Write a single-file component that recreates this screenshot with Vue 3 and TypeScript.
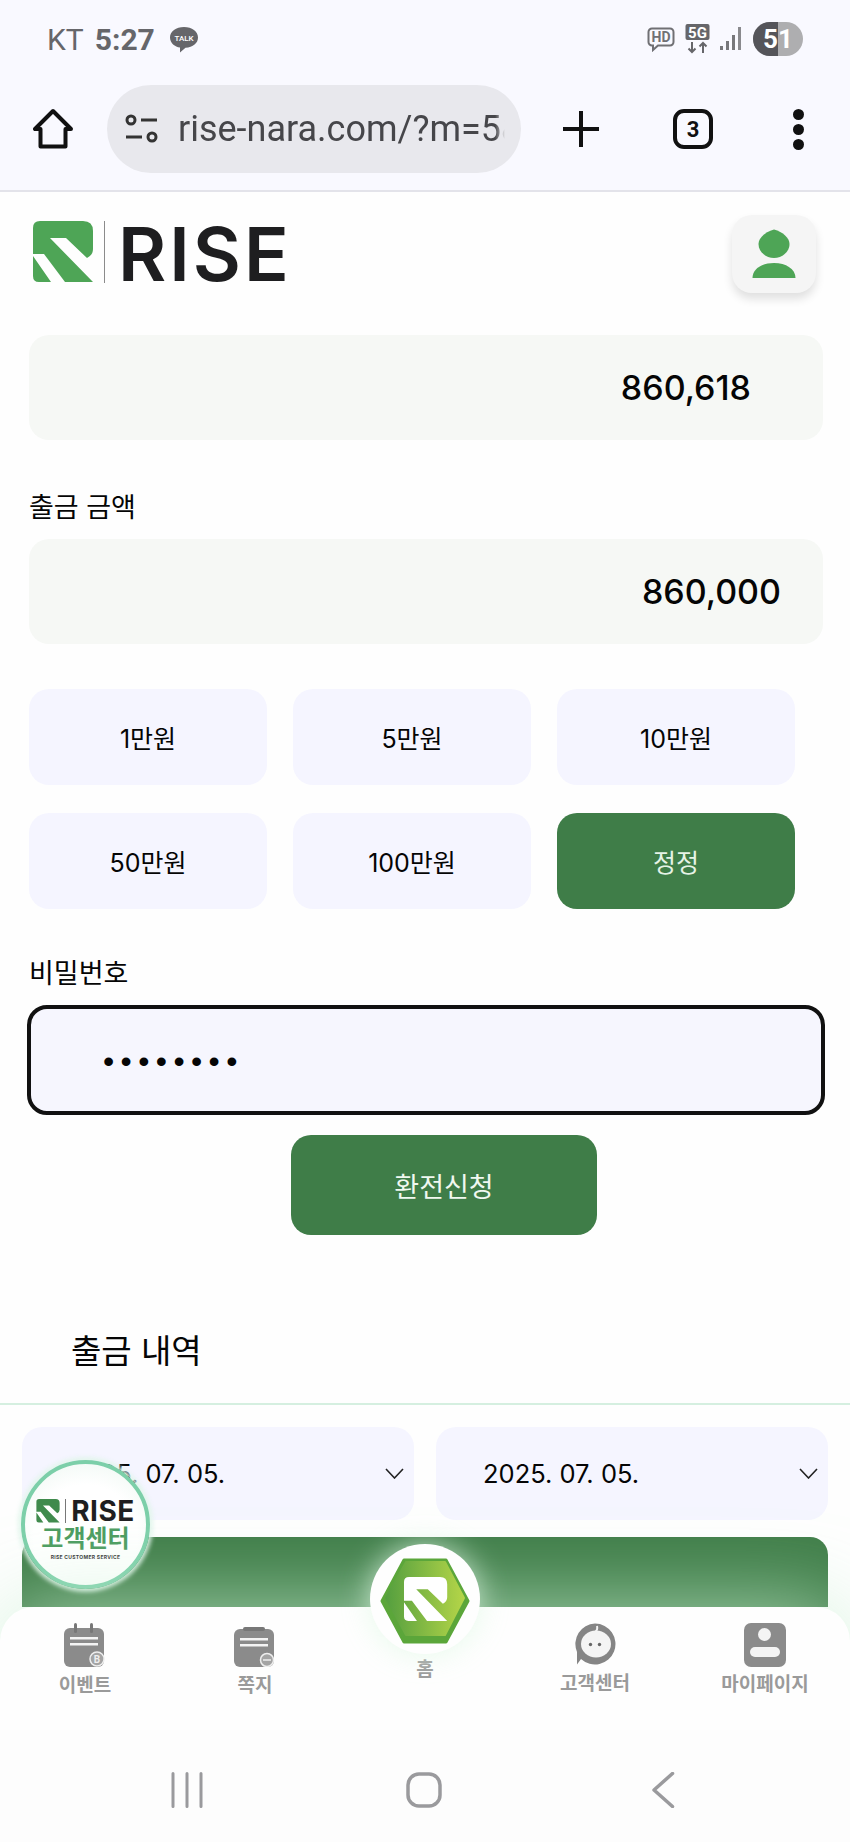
<script setup lang="ts">
interface NavItem {
  label: string;
  kind: "event" | "note" | "home" | "support" | "my";
}

// logo mark, drawn on a 60x62 box
const logoMark =
  "M7 0H50Q60 0 60 10V28Q60 34 54 37L33 17H17L60 61H32L11 33H0V7Q0 0 7 0ZM0 35L18 61H6Q0 61 0 55Z";

const amounts: { label: string; primary?: boolean }[] = [
  { label: "1만원" },
  { label: "5만원" },
  { label: "10만원" },
  { label: "50만원" },
  { label: "100만원" },
  { label: "정정", primary: true },
];

const navItems: NavItem[] = [
  { label: "이벤트", kind: "event" },
  { label: "쪽지", kind: "note" },
  { label: "홈", kind: "home" },
  { label: "고객센터", kind: "support" },
  { label: "마이페이지", kind: "my" },
];
</script>

<template>
  <div class="phone">
    <div class="status-bar">
      <div class="status-left">
        <span class="carrier">KT</span>
        <span class="clock">5:27</span>
        <svg class="talk" width="30" height="27" viewBox="0 0 30 27">
          <path d="M15 1C7 1 1 5.500 1 11.500C1 17 6 21 11 21.500L11 26.500L16.500 21.800C24 21.500 29 17 29 11.500C29 5.500 23 1 15 1Z" fill="#66666a" />
          <text x="15" y="14.500" text-anchor="middle" class="talk-text">TALK</text>
        </svg>
      </div>
      <div class="status-right">
        <svg width="28" height="25" viewBox="0 0 28 25">
          <path d="M5 1.500H23A3.500 3.500 0 0 1 26.500 5V15A3.500 3.500 0 0 1 23 18.500H11L6 23V18.500H5A3.500 3.500 0 0 1 1.500 15V5A3.500 3.500 0 0 1 5 1.500Z" fill="none" stroke="#707074" stroke-width="2" />
          <text x="14" y="15" text-anchor="middle" class="hd-text">HD</text>
        </svg>
        <svg width="25" height="30" viewBox="0 0 25 30">
          <rect x="0.500" y="0" width="24" height="16" rx="2" fill="#66666a" />
          <text x="12.500" y="13.500" text-anchor="middle" class="fiveg-text">5G</text>
          <path d="M7 18V28M3.500 24.500L7 28L10.500 24.500M18 29V19M14.500 22.500L18 19L21.500 22.500" fill="none" stroke="#66666a" stroke-width="2" />
        </svg>
        <svg width="22" height="24" viewBox="0 0 22 24">
          <rect x="0" y="19" width="3" height="4" fill="#77777b" />
          <rect x="6" y="14" width="3" height="9" fill="#77777b" />
          <rect x="12" y="8" width="3" height="15" fill="#77777b" />
          <rect x="18" y="0" width="3" height="23" fill="#8a8a8e" />
        </svg>
        <div class="battery">
          <span class="battery-level"></span>
          <span class="battery-num">51</span>
        </div>
      </div>
    </div>

    <div class="toolbar">
      <svg width="40" height="42" viewBox="0 0 40 42">
        <path d="M20 3L2 21H7.500V38.500H32.500V21H38Z" fill="none" stroke="#111" stroke-width="4" stroke-linejoin="round" />
      </svg>
      <div class="url-pill">
        <svg width="33" height="30" viewBox="0 0 33 30">
          <circle cx="6" cy="6" r="4" fill="none" stroke="#333" stroke-width="3" />
          <path d="M16 6H32M1 23H17" stroke="#333" stroke-width="3" />
          <circle cx="27" cy="23" r="4" fill="none" stroke="#333" stroke-width="3" />
        </svg>
        <span class="url-text">rise-nara.com/?m=5&amp;</span>
      </div>
      <svg class="plus" width="38" height="38" viewBox="0 0 38 38">
        <path d="M19 1V37M1 19H37" stroke="#111" stroke-width="4" />
      </svg>
      <div class="tabs">3</div>
      <div class="dots"><i></i><i></i><i></i></div>
    </div>

    <main class="page">
      <header class="site-header">
        <div class="logo">
          <svg width="60" height="62" viewBox="0 0 60 62">
            <path :d="logoMark" fill="#4ea556" />
          </svg>
          <span class="logo-rule"></span>
          <span class="logo-text">RISE</span>
        </div>
        <button class="profile" type="button">
          <svg width="44" height="50" viewBox="0 0 44 50">
            <path d="M22 0.500C31 3 37.500 9 37.500 15C37.500 23 30 29 22 29C14 29 6.500 23 6.500 15C6.500 9 13 3 22 0.500Z" fill="#4ea556" />
            <path d="M0.500 49C0.500 40 10 34 22 34C34 34 43.500 40 43.500 49Z" fill="#4ea556" />
          </svg>
        </button>
      </header>

      <section class="form">
        <div class="field first"><span class="balance">860,618</span></div>
        <label class="label">출금 금액</label>
        <div class="field"><span class="amount">860,000</span></div>

        <div class="amount-grid">
          <button
            v-for="item in amounts"
            :key="item.label"
            type="button"
            class="amount-btn"
            :class="{ primary: item.primary }"
          >
            {{ item.label }}
          </button>
        </div>

        <label class="label pw-label">비밀번호</label>
        <div class="password">••••••••</div>
        <button class="submit" type="button">환전신청</button>
      </section>

      <h2 class="history-title">출금 내역</h2>
      <div class="history">
        <div class="dates">
          <div v-for="n in 2" :key="n" class="date">
            <span>2025. 07. 05.</span>
            <svg width="19" height="11" viewBox="0 0 19 11">
              <path d="M1 1L9.500 10L18 1" fill="none" stroke="#222" stroke-width="1.600" />
            </svg>
          </div>
        </div>
        <div class="green-card"></div>
      </div>

      <div class="support-badge">
        <div class="badge-logo">
          <svg width="24" height="24" viewBox="0 0 60 62">
            <path :d="logoMark" fill="#3f8a4c" />
          </svg>
          <span class="badge-rule"></span>
          <span class="badge-rise">RISE</span>
        </div>
        <div class="badge-title">고객센터</div>
        <div class="badge-sub">RISE CUSTOMER SERVICE</div>
      </div>
    </main>

    <nav class="bottom-nav">
      <div v-for="item in navItems" :key="item.kind" class="nav-item" :class="item.kind">
        <svg v-if="item.kind === 'event'" width="42" height="44" viewBox="0 0 42 44">
          <rect x="0" y="5" width="40" height="39" rx="6" fill="#8b8b8b" />
          <rect x="10" y="0" width="3" height="10" rx="1.500" fill="#777" />
          <rect x="26" y="0" width="3" height="10" rx="1.500" fill="#777" />
          <rect x="6" y="14" width="28" height="2.500" fill="#f4f4f4" />
          <rect x="6" y="20" width="28" height="2.500" fill="#f4f4f4" />
          <circle cx="33" cy="36" r="7" fill="#a4a4a4" stroke="#eee" stroke-width="1.500" />
          <text x="33" y="39.500" text-anchor="middle" class="icon-letter">B</text>
        </svg>
        <svg v-else-if="item.kind === 'note'" width="42" height="40" viewBox="0 0 42 40">
          <rect x="0" y="2" width="40" height="38" rx="6" fill="#8b8b8b" />
          <rect x="9" y="0" width="22" height="4" rx="2" fill="#777" />
          <rect x="6" y="11" width="28" height="2.500" fill="#f4f4f4" />
          <rect x="6" y="17" width="28" height="2.500" fill="#f4f4f4" />
          <circle cx="33" cy="33" r="6.500" fill="#a4a4a4" stroke="#eee" stroke-width="1.500" />
          <path d="M29 33H37" stroke="#eee" stroke-width="1.500" />
        </svg>
        <div v-else-if="item.kind === 'home'" class="home-badge">
          <svg width="90" height="86" viewBox="0 0 90 86">
            <defs>
              <linearGradient id="hexFill" x1="0" y1="0" x2="1" y2="0">
                <stop offset="0" stop-color="#559f3f" />
                <stop offset="1" stop-color="#b4d548" />
              </linearGradient>
            </defs>
            <path d="M24 2H66L88 43L66 84H24L2 43Z" fill="#5ba63a" stroke="#5ba63a" stroke-width="3" stroke-linejoin="round" />
            <path d="M26 4H65L84 40L65 77H26L6 40Z" fill="url(#hexFill)" stroke="url(#hexFill)" stroke-width="2" stroke-linejoin="round" />
            <path :d="logoMark" fill="#fff" transform="translate(24 19) scale(0.72)" />
          </svg>
        </div>
        <svg v-else-if="item.kind === 'support'" width="42" height="42" viewBox="0 0 42 42">
          <path d="M21 0.500A20.500 20.500 0 1 1 7 36L3 41.500V29A20.500 20.500 0 0 1 21 0.500Z" fill="#858585" />
          <ellipse cx="22" cy="21" rx="15" ry="13.500" fill="#f4f4f4" />
          <path d="M21 9Q24 7 23 3" fill="none" stroke="#f4f4f4" stroke-width="2" />
          <circle cx="16.500" cy="21.500" r="1.700" fill="#666" />
          <circle cx="25.500" cy="21.500" r="1.700" fill="#666" />
        </svg>
        <svg v-else width="42" height="44" viewBox="0 0 42 44">
          <rect x="0" y="0" width="42" height="44" rx="7" fill="#8b8b8b" />
          <circle cx="20.500" cy="11.500" r="6.500" fill="#f4f4f4" />
          <rect x="6" y="24" width="30" height="10" rx="5" fill="#f4f4f4" />
        </svg>
        <span class="nav-label">{{ item.label }}</span>
      </div>
    </nav>

    <div class="system-nav">
      <svg width="32" height="36" viewBox="0 0 32 36">
        <path d="M2 1.500V34.500M16 1.500V34.500M30 1.500V34.500" stroke="#9a9a9d" stroke-width="3" stroke-linecap="round" />
      </svg>
      <svg width="36" height="36" viewBox="0 0 36 36">
        <rect x="2" y="2" width="32" height="32" rx="11" fill="none" stroke="#9a9a9d" stroke-width="3.500" />
      </svg>
      <svg width="24" height="36" viewBox="0 0 24 36">
        <path d="M21.500 1.500L3 18L21.500 34.500" fill="none" stroke="#9a9a9d" stroke-width="3.500" stroke-linecap="round" stroke-linejoin="round" />
      </svg>
    </div>
  </div>
</template>

<style scoped>
.phone {
  width: 850px;
  height: 1842px;
  display: flex;
  flex-direction: column;
  overflow: hidden;
  position: relative;
  background: #fefefe;
  font-family: Inter, "Noto Sans CJK KR", sans-serif;
  color: #050505;
}

.status-bar {
  height: 70px;
  flex: none;
  background: #f9f9ff;
  display: flex;
  justify-content: space-between;
  align-items: center;
  padding: 8px 47px 0;
  box-sizing: border-box;
  color: #66666a;
}

.status-left {
  display: flex;
  align-items: center;
  font-family: Roboto, sans-serif;
  font-size: 30px;
}

.clock {
  font-weight: 700;
  margin-left: 11px;
}

.talk {
  margin-left: 14px;
}

.talk-text {
  font-family: Roboto, sans-serif;
  font-size: 8px;
  font-weight: 500;
  fill: #fff;
}

.hd-text {
  font-family: Roboto, sans-serif;
  font-size: 14px;
  font-weight: 700;
  fill: #707074;
}

.fiveg-text {
  font-family: Roboto, sans-serif;
  font-size: 15px;
  font-weight: 700;
  fill: #fff;
}

.icon-letter {
  font-family: Roboto, sans-serif;
  font-size: 10px;
  font-weight: 700;
  fill: #eee;
}

.status-right {
  display: flex;
  align-items: center;
  gap: 10px;
}

.battery {
  width: 50px;
  height: 34px;
  border-radius: 17px;
  background: #aeaeb0;
  overflow: hidden;
  position: relative;
  display: flex;
  align-items: center;
  justify-content: center;
  margin-left: 1px;
}

.battery-level {
  position: absolute;
  left: 0;
  top: 0;
  bottom: 0;
  width: 25px;
  background: #55555a;
}

.battery-num {
  position: relative;
  color: #fff;
  font-family: Roboto, sans-serif;
  font-size: 26px;
  font-weight: 700;
}

.toolbar {
  height: 122px;
  flex: none;
  box-sizing: border-box;
  background: #f9f9ff;
  border-bottom: 2px solid #e3e3ea;
  display: flex;
  align-items: center;
  padding: 0 0 2px 33px;
}

.url-pill {
  width: 414px;
  height: 88px;
  margin-left: 34px;
  border-radius: 44px;
  background: #e8e8ed;
  box-sizing: border-box;
  padding: 0 16px 0 18px;
  display: flex;
  align-items: center;
  gap: 20px;
  overflow: hidden;
  flex: none;
}

.url-pill svg {
  flex: none;
}

.url-text {
  font-family: Roboto, sans-serif;
  font-size: 36px;
  color: #46464a;
  white-space: nowrap;
  overflow: hidden;
  -webkit-mask-image: linear-gradient(to right, #000 97%, transparent);
  mask-image: linear-gradient(to right, #000 97%, transparent);
}

.plus {
  margin-left: 41px;
}

.tabs {
  width: 40px;
  height: 40px;
  margin-left: 73px;
  box-sizing: border-box;
  border: 4px solid #111;
  border-radius: 11px;
  display: flex;
  align-items: center;
  justify-content: center;
  font-family: Roboto, sans-serif;
  font-size: 22px;
  font-weight: 700;
  color: #111;
}

.dots {
  margin-left: 80px;
  display: flex;
  flex-direction: column;
  gap: 4px;
}

.dots i {
  display: block;
  width: 11px;
  height: 11px;
  border-radius: 50%;
  background: #111;
}

.page {
  flex: 1;
  min-height: 0;
  overflow: hidden;
  position: relative;
}

.site-header {
  height: 118px;
  box-sizing: border-box;
  padding: 23px 34px 0 33px;
  display: flex;
  justify-content: space-between;
  align-items: flex-start;
}

.logo {
  display: flex;
  align-items: center;
  height: 62px;
  margin-top: 6px;
}

.logo-rule {
  width: 1px;
  height: 62px;
  background: #8b8b8b;
  margin-left: 11px;
}

.logo-text {
  font-family: Inter, sans-serif;
  font-size: 74px;
  font-weight: 600;
  line-height: 62px;
  letter-spacing: 3px;
  color: #1e1e20;
  margin-left: 13px;
  padding-top: 3px;
}

.profile {
  width: 84px;
  height: 78px;
  border: none;
  border-radius: 20px;
  background: #f5f5f5;
  box-shadow: 0 6px 10px rgba(0, 0, 0, 0.12);
  display: flex;
  align-items: center;
  justify-content: center;
  padding: 0;
}

.form {
  padding: 25px 27px 0 29px;
  display: flex;
  flex-direction: column;
}

.field {
  height: 105px;
  border-radius: 20px;
  background: #f6f8f5;
  display: flex;
  align-items: center;
  justify-content: flex-end;
  font-size: 34px;
  font-weight: 500;
  padding-right: 42px;
}

.field.first {
  padding-right: 72px;
}

.label {
  font-size: 27px;
  line-height: 38px;
  margin: 49px 0 12px;
}

.amount-grid {
  display: grid;
  grid-template-columns: repeat(3, 238px);
  column-gap: 26px;
  row-gap: 28px;
  margin-top: 45px;
}

.amount-btn {
  height: 96px;
  border: none;
  border-radius: 20px;
  background: #f5f5ff;
  font: inherit;
  font-size: 25px;
  color: #050505;
  padding: 0;
}

.amount-btn.primary {
  background: #3f7d48;
  color: #e6f3e6;
}

.pw-label {
  margin: 46px 0 12px;
}

.password {
  height: 110px;
  margin: 0 -2px;
  box-sizing: border-box;
  border: 4px solid #111;
  border-radius: 20px;
  background: #f6f6fe;
  display: flex;
  align-items: center;
  padding: 3px 0 0 72px;
  font-family: "Liberation Sans", sans-serif;
  font-size: 32px;
  letter-spacing: 6.400px;
}

.submit {
  width: 306px;
  height: 100px;
  margin: 20px 0 0 262px;
  border: none;
  border-radius: 20px;
  background: #3f7d48;
  color: #f0f8f0;
  font: inherit;
  font-size: 27px;
  padding: 0;
}

.history-title {
  margin: 88px 0 0;
  padding-left: 71px;
  height: 80px;
  font-size: 33px;
  font-weight: 400;
  line-height: 56px;
  border-bottom: 2px solid #d5efe0;
}

.history {
  padding: 22px 22px 0;
}

.dates {
  display: grid;
  grid-template-columns: 392px 392px;
  gap: 22px;
}

.date {
  height: 93px;
  border-radius: 20px;
  background: #f5f5ff;
  display: flex;
  align-items: center;
  justify-content: space-between;
  padding: 0 10px 0 47px;
  font-size: 25.500px;
}

.green-card {
  height: 90px;
  margin-top: 17px;
  border-radius: 18px 18px 0 0;
  background: #3f7d48;
}

.support-badge {
  position: absolute;
  left: 21px;
  top: 1268px;
  width: 129px;
  height: 129px;
  box-sizing: border-box;
  border: 4px solid #7ccfa9;
  border-radius: 50%;
  background: radial-gradient(circle at 50% 60%, #fff 55%, #eaf6ef);
  display: flex;
  flex-direction: column;
  align-items: center;
  justify-content: center;
  padding-top: 11px;
  box-shadow: 0 0 4px 3px rgba(225, 245, 235, 0.9);
}

.badge-logo {
  display: flex;
  align-items: center;
}

.badge-rule {
  width: 1px;
  height: 24px;
  background: #777;
  margin: 0 5px;
}

.badge-rise {
  font-family: Inter, sans-serif;
  font-size: 28px;
  font-weight: 700;
  line-height: 24px;
  letter-spacing: 0.500px;
  color: #1e1e20;
}

.badge-title {
  font-size: 24px;
  font-weight: 700;
  line-height: 26px;
  margin-top: 3px;
  color: #4a9b5e;
}

.badge-sub {
  font-size: 5px;
  font-weight: 700;
  letter-spacing: 0.300px;
  line-height: 10px;
  color: #333;
  white-space: nowrap;
}

.bottom-nav {
  height: 123px;
  flex: none;
  position: relative;
  display: grid;
  grid-template-columns: repeat(5, 170px);
  background: #fefefe;
  border-radius: 34px 34px 0 0;
  box-shadow: 0 0 90px rgba(200, 240, 210, 0.8);
}

.nav-item {
  display: flex;
  flex-direction: column;
  align-items: center;
  padding-top: 16px;
  position: relative;
}

.nav-item.note {
  padding-top: 20px;
}

.nav-label {
  font-size: 19px;
  font-weight: 700;
  line-height: 24px;
  color: #9a9a9a;
  margin-top: 7px;
}

.nav-item.my .nav-label {
  margin-top: 6px;
}

.nav-item.home {
  padding-top: 44px;
}

.home-badge {
  position: absolute;
  left: 30px;
  top: -63px;
  width: 110px;
  height: 110px;
  border-radius: 50%;
  background: #fefefe;
  box-shadow: 0 0 30px rgba(225, 250, 230, 0.8);
  display: flex;
  align-items: flex-start;
  justify-content: center;
  padding-top: 14px;
  box-sizing: border-box;
}

.system-nav {
  height: 112px;
  flex: none;
  box-sizing: border-box;
  background: #fdfdfd;
  position: relative;
  display: flex;
  align-items: flex-start;
  padding: 42px 0 0 171px;
}

.system-nav svg:nth-child(2) {
  margin-left: 203px;
}

.system-nav svg:nth-child(3) {
  margin-left: 209px;
}
</style>
